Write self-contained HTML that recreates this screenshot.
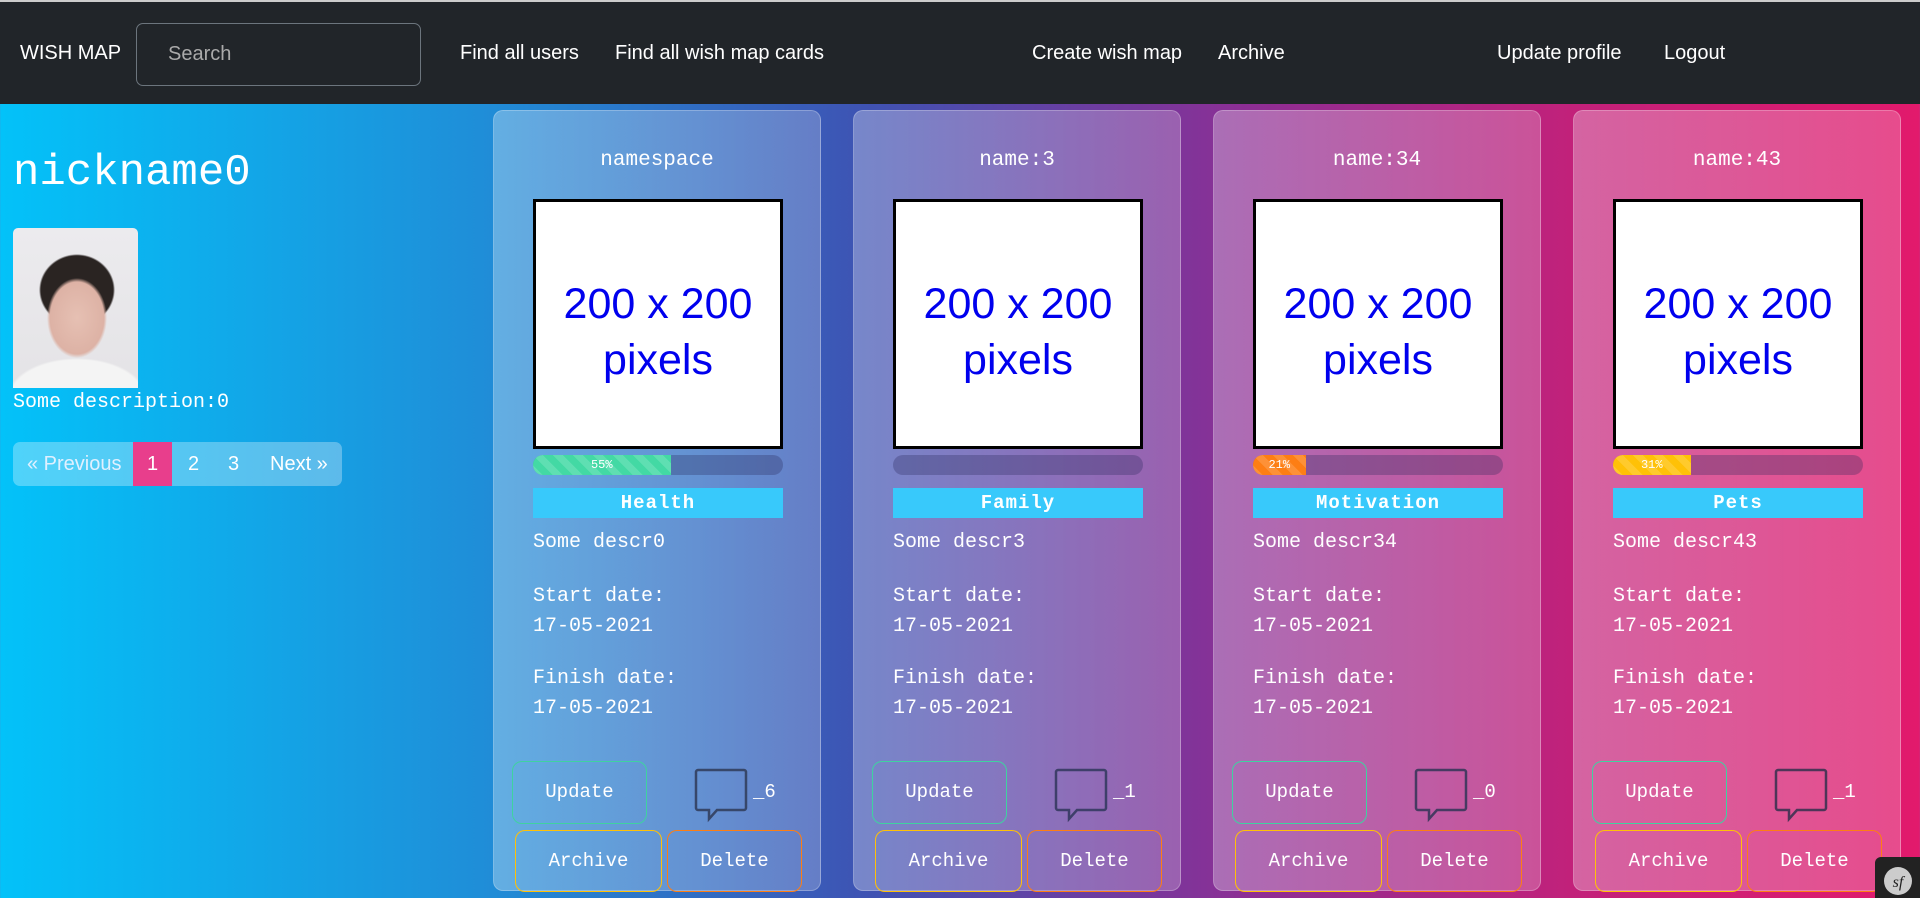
<!DOCTYPE html>
<html><head><meta charset="utf-8"><style>
*{box-sizing:border-box;margin:0;padding:0}
html,body{width:1920px;height:898px;overflow:hidden}
body{background:linear-gradient(90deg,#03c2f9 0%,#1f8ed8 25%,#3e53b3 45%,#8d2e94 65%,#c2217a 82%,#e21a6c 100%);font-family:"Liberation Mono",monospace;color:#fff;position:relative}
.nav{position:absolute;left:0;top:0;width:1920px;height:104px;background:#212529;border-top:2px solid #ccc;font-family:"Liberation Sans",sans-serif;font-size:20px;color:#fff}
.nav span{position:absolute;top:40px}
.search{position:absolute;left:136px;top:21px;width:285px;height:63px;border:1px solid #6c757d;border-radius:7px;color:#aaa;padding:19px 0 0 31px;font-size:20px}
.left h1{position:absolute;left:13px;top:148px;font-size:44px;font-weight:normal}
.photo{position:absolute;left:13px;top:228px;width:125px;height:160px;border-radius:5px 5px 0 0;background:radial-gradient(ellipse 30px 40px at 64px 90px,#e6c0b3 0,#ddb2a5 90%,transparent 100%),radial-gradient(ellipse 38px 36px at 64px 62px,#2a2422 0 95%,transparent 100%),radial-gradient(ellipse 70px 40px at 64px 170px,#f4f4f4 0 95%,transparent 100%),linear-gradient(#ecebee,#e4e3e6);}
.desc{position:absolute;left:13px;top:391px;font-size:20px}
.pag{position:absolute;left:13px;top:442px;height:44px;width:329px;border-radius:7px;background:rgba(255,255,255,.3);font-family:"Liberation Sans",sans-serif;font-size:20px;overflow:hidden}
.pag span{position:absolute;top:11px}
.card{position:absolute;top:110px;width:328px;height:781px;border-radius:10px;background:linear-gradient(90deg,rgba(255,255,255,.3),rgba(255,255,255,.22));border:1px solid rgba(255,255,255,.25)}
.card .t{position:absolute;top:38px;width:100%;text-align:center;font-size:21px}
.img{position:absolute;left:39px;top:88px;width:250px;height:250px;background:#fff;border:3px solid #000;color:#0000ee;font-family:"Liberation Sans",sans-serif;font-size:43px;text-align:center;padding-top:74px;line-height:56px}
.prog{position:absolute;left:39px;top:344px;width:250px;height:20px;border-radius:10px;background:rgba(40,40,90,.3);overflow:hidden}
.prog div{height:100%;font-size:12px;text-align:center;line-height:20px;background-image:linear-gradient(45deg,rgba(255,255,255,.15) 25%,transparent 25%,transparent 50%,rgba(255,255,255,.15) 50%,rgba(255,255,255,.15) 75%,transparent 75%);background-size:20px 20px}
.cat{position:absolute;left:39px;top:377px;width:250px;height:30px;background:#38c9fb;font-weight:bold;text-align:center;line-height:30px;font-size:19px;letter-spacing:1px}
.l{position:absolute;left:39px;font-size:20px;line-height:30px}
.btn{position:absolute;border-radius:10px;border:1px solid;font-size:19px;text-align:center}
.cm{position:absolute;left:200px;top:657px}
.cnt{position:absolute;left:259px;top:670px;font-size:19px}
.sf{position:absolute;left:1875px;top:857px;width:45px;height:41px;background:#222;border-radius:6px 0 0 0}
</style></head><body>
<div class="nav">
<span style="left:20px">WISH MAP</span>
<div class="search">Search</div>
<span style="left:460px">Find all users</span>
<span style="left:615px">Find all wish map cards</span>
<span style="left:1032px">Create wish map</span>
<span style="left:1218px">Archive</span>
<span style="left:1497px">Update profile</span>
<span style="left:1664px">Logout</span>
</div>
<div class="left">
<h1>nickname0</h1>
<div class="photo"></div>
<div class="desc">Some description:0</div>
<div class="pag">
<span style="left:14px;color:#e0f0ff">« Previous</span>
<div style="position:absolute;left:120px;top:0;width:39px;height:44px;background:#e83e8c"></div>
<span style="left:134px">1</span>
<span style="left:175px">2</span>
<span style="left:215px">3</span>
<span style="left:257px">Next »</span>
</div>
</div>

<div class="card" style="left:493px">
<div class="t">namespace</div>
<div class="img">200 x 200<br>pixels</div>
<div class="prog"><div style="width:55%;background-color:#43d9a4">55%</div></div>
<div class="cat">Health</div>
<div class="l" style="top:417px">Some descr0</div><div class="l" style="top:471px">Start date:</div><div class="l" style="top:501px">17-05-2021</div><div class="l" style="top:553px">Finish date:</div><div class="l" style="top:583px">17-05-2021</div>
<div class="btn" style="left:18px;top:650px;width:135px;height:63px;line-height:61px;border-color:#3fd2a0">Update</div>
<svg class="cm" width="56" height="56" viewBox="0 0 56 56"><path d="M4 2h46a2 2 0 0 1 2 2v36a2 2 0 0 1-2 2H23l-8 9v-9H4a2 2 0 0 1-2-2V4a2 2 0 0 1 2-2z" fill="none" stroke="#37476a" stroke-width="2.5"/></svg>
<div class="cnt">_6</div>
<div class="btn" style="left:21px;top:719px;width:147px;height:62px;line-height:60px;border-color:#ffc107">Archive</div>
<div class="btn" style="left:173px;top:719px;width:135px;height:62px;line-height:60px;border-color:#fd7e14">Delete</div>
</div>

<div class="card" style="left:853px">
<div class="t">name:3</div>
<div class="img">200 x 200<br>pixels</div>
<div class="prog"><div style="width:0"></div></div>
<div class="cat">Family</div>
<div class="l" style="top:417px">Some descr3</div><div class="l" style="top:471px">Start date:</div><div class="l" style="top:501px">17-05-2021</div><div class="l" style="top:553px">Finish date:</div><div class="l" style="top:583px">17-05-2021</div>
<div class="btn" style="left:18px;top:650px;width:135px;height:63px;line-height:61px;border-color:#3fd2a0">Update</div>
<svg class="cm" width="56" height="56" viewBox="0 0 56 56"><path d="M4 2h46a2 2 0 0 1 2 2v36a2 2 0 0 1-2 2H23l-8 9v-9H4a2 2 0 0 1-2-2V4a2 2 0 0 1 2-2z" fill="none" stroke="#3e3f6a" stroke-width="2.5"/></svg>
<div class="cnt">_1</div>
<div class="btn" style="left:21px;top:719px;width:147px;height:62px;line-height:60px;border-color:#ffc107">Archive</div>
<div class="btn" style="left:173px;top:719px;width:135px;height:62px;line-height:60px;border-color:#fd7e14">Delete</div>
</div>

<div class="card" style="left:1213px">
<div class="t">name:34</div>
<div class="img">200 x 200<br>pixels</div>
<div class="prog"><div style="width:21%;background-color:#fd7e14">21%</div></div>
<div class="cat">Motivation</div>
<div class="l" style="top:417px">Some descr34</div><div class="l" style="top:471px">Start date:</div><div class="l" style="top:501px">17-05-2021</div><div class="l" style="top:553px">Finish date:</div><div class="l" style="top:583px">17-05-2021</div>
<div class="btn" style="left:18px;top:650px;width:135px;height:63px;line-height:61px;border-color:#3fd2a0">Update</div>
<svg class="cm" width="56" height="56" viewBox="0 0 56 56"><path d="M4 2h46a2 2 0 0 1 2 2v36a2 2 0 0 1-2 2H23l-8 9v-9H4a2 2 0 0 1-2-2V4a2 2 0 0 1 2-2z" fill="none" stroke="#473a62" stroke-width="2.5"/></svg>
<div class="cnt">_0</div>
<div class="btn" style="left:21px;top:719px;width:147px;height:62px;line-height:60px;border-color:#ffc107">Archive</div>
<div class="btn" style="left:173px;top:719px;width:135px;height:62px;line-height:60px;border-color:#fd7e14">Delete</div>
</div>

<div class="card" style="left:1573px">
<div class="t">name:43</div>
<div class="img">200 x 200<br>pixels</div>
<div class="prog"><div style="width:31%;background-color:#ffc107">31%</div></div>
<div class="cat">Pets</div>
<div class="l" style="top:417px">Some descr43</div><div class="l" style="top:471px">Start date:</div><div class="l" style="top:501px">17-05-2021</div><div class="l" style="top:553px">Finish date:</div><div class="l" style="top:583px">17-05-2021</div>
<div class="btn" style="left:18px;top:650px;width:135px;height:63px;line-height:61px;border-color:#3fd2a0">Update</div>
<svg class="cm" width="56" height="56" viewBox="0 0 56 56"><path d="M4 2h46a2 2 0 0 1 2 2v36a2 2 0 0 1-2 2H23l-8 9v-9H4a2 2 0 0 1-2-2V4a2 2 0 0 1 2-2z" fill="none" stroke="#4e3558" stroke-width="2.5"/></svg>
<div class="cnt">_1</div>
<div class="btn" style="left:21px;top:719px;width:147px;height:62px;line-height:60px;border-color:#ffc107">Archive</div>
<div class="btn" style="left:173px;top:719px;width:135px;height:62px;line-height:60px;border-color:#fd7e14">Delete</div>
</div>

<div class="sf"><svg width="45" height="41" viewBox="0 0 45 41"><circle cx="23" cy="24" r="14" fill="#ccc"/><text x="23" y="30" font-family="Liberation Serif,serif" font-style="italic" font-size="16" fill="#222" text-anchor="middle">sf</text></svg></div>
</body></html>
